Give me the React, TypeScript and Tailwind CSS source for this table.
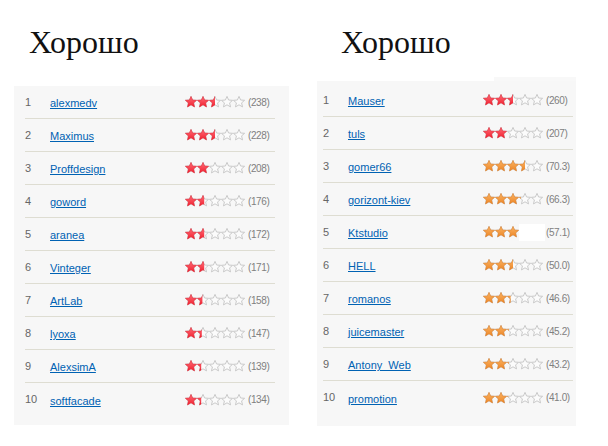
import React, { useId } from "react";

type Row = { n: number; name: string; r: number; c: string };

const left: Row[] = [
  { n: 1, name: "alexmedv", r: 2.5, c: "(238)" },
  { n: 2, name: "Maximus", r: 2.5, c: "(228)" },
  { n: 3, name: "Proffdesign", r: 2.0, c: "(208)" },
  { n: 4, name: "goword", r: 1.6, c: "(176)" },
  { n: 5, name: "aranea", r: 1.6, c: "(172)" },
  { n: 6, name: "Vinteger", r: 1.6, c: "(171)" },
  { n: 7, name: "ArtLab", r: 1.45, c: "(158)" },
  { n: 8, name: "lyoxa", r: 1.4, c: "(147)" },
  { n: 9, name: "AlexsimA", r: 1.35, c: "(139)" },
  { n: 10, name: "softfacade", r: 1.35, c: "(134)" },
];

const right: Row[] = [
  { n: 1, name: "Mauser", r: 2.5, c: "(260)" },
  { n: 2, name: "tuls", r: 2.0, c: "(207)" },
  { n: 3, name: "gomer66", r: 3.5, c: "(70.3)" },
  { n: 4, name: "gorizont-kiev", r: 3.15, c: "(66.3)" },
  { n: 5, name: "Ktstudio", r: 3.0, c: "(57.1)" },
  { n: 6, name: "HELL", r: 2.5, c: "(50.0)" },
  { n: 7, name: "romanos", r: 2.3, c: "(46.6)" },
  { n: 8, name: "juicemaster", r: 2.15, c: "(45.2)" },
  { n: 9, name: "Antony_Web", r: 2.15, c: "(43.2)" },
  { n: 10, name: "promotion", r: 2.1, c: "(41.0)" },
];

const STAR = "6,0.4 7.6,4.0 11.6,4.3 8.6,6.9 9.5,10.9 6,8.8 2.5,10.9 3.4,6.9 0.4,4.3 4.4,4.0";

function Stars({ r, orange }: { r: number; orange?: boolean }) {
  const id = useId().replace(/:/g, "");
  const top = orange ? "#fbb565" : "#ff6f7a";
  const bot = orange ? "#ec8526" : "#f1202f";
  const stroke = orange ? "#e07a1c" : "#e41b2b";
  const w = r * 12;
  return (
    <svg width="60" height="12" viewBox="0 0 60 12" className="block">
      <defs>
        <linearGradient id={`g${id}`} x1="0" y1="0" x2="0" y2="1">
          <stop offset="0" stopColor={top} />
          <stop offset="1" stopColor={bot} />
        </linearGradient>
        <clipPath id={`c${id}`}>
          <rect x="0" y="0" width={w} height="12" />
        </clipPath>
      </defs>
      {[0, 1, 2, 3, 4].map((i) => (
        <polygon
          key={`e${i}`}
          points={STAR}
          transform={`translate(${i * 12} 0)`}
          fill="#fbfbfb"
          stroke="#c4c4c4"
          strokeWidth="0.9"
          strokeLinejoin="round"
        />
      ))}
      <g clipPath={`url(#c${id})`}>
        {[0, 1, 2, 3, 4].map((i) => (
          <polygon
            key={`f${i}`}
            points={STAR}
            transform={`translate(${i * 12} 0)`}
            fill={`url(#g${id})`}
            stroke={stroke}
            strokeWidth="0.5"
            strokeLinejoin="round"
          />
        ))}
      </g>
    </svg>
  );
}

function Table({ rows, orangeFrom, mask }: { rows: Row[]; orangeFrom: number; mask?: number }) {
  return (
    <div>
      {rows.map((row, i) => (
        <div
          key={row.n}
          className={`relative flex h-[33px] items-center ${i < rows.length - 1 ? "border-b border-[#deddd2]" : ""}`}
        >
          <div className="w-[25px] text-[11px] text-[#666]">{row.n}</div>
          <div className="w-[135px]">
            <a className="text-[11px] text-[#0062b3] underline">{row.name}</a>
          </div>
          <Stars r={row.r} orange={row.n >= orangeFrom} />
          <div className="ml-[3px] text-[10px] tracking-[-0.4px] text-[#808080]">{row.c}</div>
          {mask === row.n && (
            <div className="absolute left-[196px] top-[8px] h-[17px] w-[26px] bg-white" />
          )}
        </div>
      ))}
    </div>
  );
}

export default function App() {
  return (
    <div
      className="flex h-[446px] w-[608px] bg-white"
      style={{ fontFamily: '"Liberation Sans", Arial, sans-serif' }}
    >
      <div className="ml-[14px] flex w-[275px] flex-col pt-[26px]">
        <div
          className="h-[32px] pl-[15px] text-[32px] leading-[32px] text-[#111]"
          style={{ fontFamily: '"Liberation Serif", "Times New Roman", serif' }}
        >
          Хорошо
        </div>
        <div className="mt-[28px] bg-[#f7f7f7] pb-[9px] pl-[11px] pr-[14px]">
          <Table rows={left} orangeFrom={99} />
        </div>
      </div>
      <div className="ml-[28px] flex w-[259px] flex-col pt-[26px]">
        <div
          className="h-[32px] pl-[24px] text-[32px] leading-[32px] text-[#111]"
          style={{ fontFamily: '"Liberation Serif", "Times New Roman", serif' }}
        >
          Хорошо
        </div>
        <div className="relative mt-[23px] bg-[#f7f7f7] pb-[12px] pl-[6px] pr-[3px] pt-[3px]">
          <div className="absolute right-0 top-[-4px] h-[4px] w-[82px] bg-[#f8f8f8]" />
          <Table rows={right} orangeFrom={3} mask={5} />
        </div>
      </div>
    </div>
  );
}
